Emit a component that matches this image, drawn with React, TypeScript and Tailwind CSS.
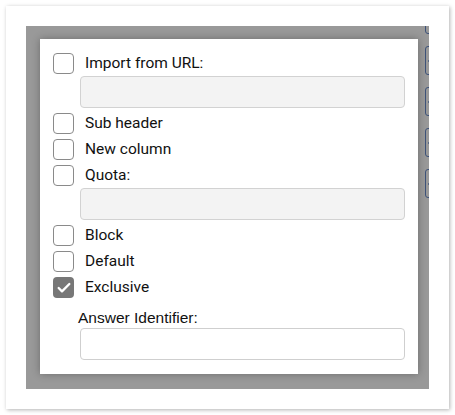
import { Check } from "lucide-react";

type Opt = { label: string; checked?: boolean; input?: boolean };

const opciones: Opt[] = [
  { label: "Import from URL:", input: true },
  { label: "Sub header" },
  { label: "New column" },
  { label: "Quota:", input: true },
  { label: "Block" },
  { label: "Default" },
  { label: "Exclusive", checked: true },
];

function Casilla({ checked }: { checked?: boolean }) {
  if (checked) {
    return (
      <div className="w-[21px] h-[21px] shrink-0 rounded-[4px] bg-[#777] flex items-center justify-center">
        <Check size={16} strokeWidth={3.5} className="text-white" />
      </div>
    );
  }
  return <div className="w-[21px] h-[21px] shrink-0 rounded-[4px] border-[1.5px] border-[#8a8a8a] bg-white" />;
}

export default function App() {
  return (
    <div className="w-[455px] h-[415px] bg-white pt-[6px] pl-[6px]">
      <div className="w-[443px] h-[403px] bg-white shadow-[1px_1px_4px_rgba(0,0,0,0.3)] p-[20px]">
        <div className="w-[403px] h-[363px] bg-[#999] flex overflow-hidden">
          <div className="shrink-0 ml-[14px] mt-[13px] w-[378px] h-[335px] bg-white shadow-[0_0_8px_rgba(0,0,0,0.3)] px-[13px] pt-[14px] flex flex-col gap-[5px] font-['Roboto',sans-serif] text-[15.5px] text-[#111]">
            {opciones.map((o) => (
              <div key={o.label} className="flex flex-col">
                <div className="flex items-center gap-[11px] h-[21px]">
                  <Casilla checked={o.checked} />
                  <span className="leading-none">{o.label}</span>
                </div>
                {o.input && (
                  <div className="ml-[27px] mt-[2px] h-[32px] rounded-[4px] border border-[#d2d2d2] bg-[#f3f3f3]" />
                )}
              </div>
            ))}
            <div className="ml-[25px] mt-[7px] font-['Liberation_Sans',Arial,sans-serif] text-[15.5px] leading-[16px]">
              Answer Identifier:
            </div>
            <div className="ml-[27px] -mt-[3px] h-[32px] rounded-[4px] border border-[#cfcfcf] bg-white" />
          </div>
          <div className="shrink-0 ml-[7px] -mt-[21px] flex flex-col gap-[12px]">
            {[0, 1, 2, 3, 4].map((i) => (
              <div key={i} className="w-[30px] h-[29px] rounded-[3px] border border-[#3d5278] flex items-center pl-[2px]">
                <div className="w-[2px] h-[2px] bg-[#5a6a85]" />
              </div>
            ))}
          </div>
        </div>
      </div>
    </div>
  );
}
